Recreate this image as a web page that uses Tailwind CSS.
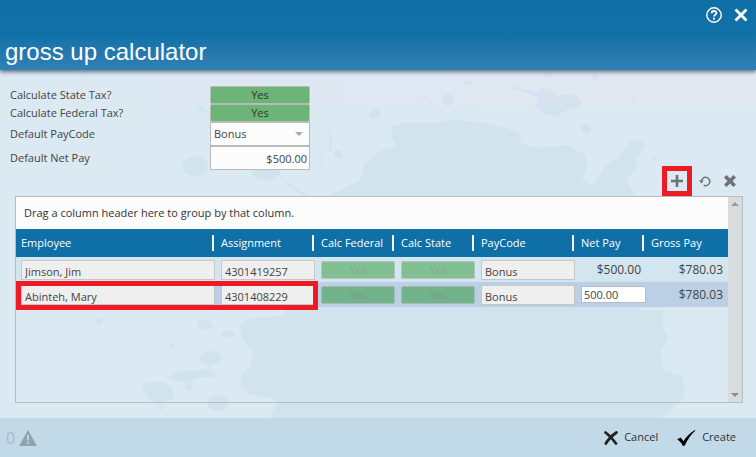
<!DOCTYPE html>
<html lang="en">
<head>
    <meta charset="UTF-8">
    <meta name="viewport" content="width=device-width, initial-scale=1.0">
    <title>Gross Up Calculator</title>
    <script src="https://cdn.jsdelivr.net/npm/@tailwindcss/browser@4"></script>
</head>
<body class="relative isolate min-h-screen flex flex-col bg-[#dae8f1] font-['Open_Sans',sans-serif] text-[11px] text-[#444]">
    <!-- paint splatter backdrop -->
    <svg class="absolute inset-0 -z-10 w-full h-full" viewBox="0 0 756 457" preserveAspectRatio="xMidYMid slice" aria-hidden="true">
        <defs>
            <linearGradient id="sky" x1="0" y1="0" x2="1" y2="0">
                <stop offset="0" stop-color="#dae9f2"/>
                <stop offset=".35" stop-color="#dfe8f2"/>
                <stop offset="1" stop-color="#e1e8f2"/>
            </linearGradient>
        </defs>
        <rect width="756" height="457" fill="#dae9f2"/>
        <rect y="70" width="756" height="37" fill="url(#sky)"/>
        <g fill="#d7e2f0">
            <path d="M511 86l26 6 4-4 9 1 7 6 8 0 8-1 9 6-1 5-5 3H535l3-6-3-6-24-8z"/>
            <ellipse cx="448" cy="100" rx="7" ry="6"/><ellipse cx="549" cy="75" rx="5" ry="3"/><ellipse cx="595" cy="77" rx="4" ry="3"/>
            <ellipse cx="468" cy="83" rx="5" ry="2"/><circle cx="424" cy="97" r="2"/><circle cx="633" cy="101" r="2"/>
        </g>
        <g fill="#d1e4ee">
            <path d="M535 105h46l-16 6-10 6-10-3z"/>
            <ellipse cx="375" cy="114" rx="6" ry="5"/><circle cx="586" cy="129" r="5"/><circle cx="654" cy="158" r="2"/>
            <path d="M320 200L360 180 364 164 378 152 396 146 391 136 392 126 408 122 430 123 452 120 478 122 500 126 518 132 522 144 538 148 566 145 584 154 588 164 582 180 594 186 606 164 618 158 630 142 640 139 645 146 636 158 637 168 626 180 638 200z"/>
            <path d="M284 200H640V310H664L662 325 668 338 661 350 663 370 682 376 685 390 682 400 662 418H270L278 400 250 394 240 384 242 374 250 366 254 350 242 340 240 326 250 318 284 316z"/>
            <ellipse cx="195" cy="166" rx="13" ry="10"/><ellipse cx="266" cy="172" rx="14" ry="9"/><circle cx="338" cy="154" r="4"/>
            <path d="M329 125l3 14-1 12-2 0zM196 103l14 9-2 2-8-4zM321 155l2 0-1 11-1 0zM276 176l24 14 12 8-6 0z"/>
            <ellipse cx="205" cy="325" rx="8" ry="5"/><ellipse cx="211" cy="358" rx="11" ry="7"/><ellipse cx="228" cy="334" rx="7" ry="4"/>
            <path d="M142 388l4-6 18 0 8 6 2 10-10 4-3 10-3-8-8-3zM168 378l8-6 24-2 8-2 8 4-2 6-14-1-16 6zM209 360h2v12h-2z"/>
            <ellipse cx="218" cy="403" rx="11" ry="8"/><circle cx="99" cy="321" r="4"/><circle cx="172" cy="346" r="3"/><circle cx="189" cy="386" r="4"/>
        </g>
    </svg>

    <header class="h-[70px] shrink-0 flex flex-col justify-between pt-[3px] pb-[2px] bg-linear-to-b from-[#106fa5] via-[#1171a8] to-[#3080b4] text-white shadow-[0_2px_4px_#5c6f80]">
        <div class="flex justify-end items-center gap-3 px-2 h-6">
            <button type="button" aria-label="Help">
                <svg class="w-4 h-4" viewBox="0 0 16 16" fill="none" stroke="currentColor">
                    <circle cx="8" cy="8" r="7.2" stroke-width="1.4"/>
                    <path d="M5.7 6.3c0-3 4.7-3 4.7-.2 0 1.6-2.3 1.6-2.3 3.4" stroke-width="1.9"/>
                    <path d="M8 10.7v1.9" stroke-width="2"/>
                </svg>
            </button>
            <button type="button" aria-label="Close">
                <svg class="w-[14px] h-[14px]" viewBox="0 0 14 14" fill="none" stroke="currentColor" stroke-width="2.8">
                    <path d="M1.5 1.5l11 11M12.5 1.500l-11 11"/>
                </svg>
            </button>
        </div>
        <h1 class="px-[5px] font-['Liberation_Sans',sans-serif] text-2xl">gross up calculator</h1>
    </header>

    <main class="flex-1 flex flex-col px-[10px] pt-4 pb-[15px]">
        <form class="grid grid-cols-[200px_100px] items-center">
            <label for="stateTax">Calculate State Tax?</label>
            <button type="button" id="stateTax" class="h-[18px] leading-4 rounded-xs border border-[#b5bdb8] bg-[#6db577] text-[#333]">Yes</button>
            <label for="federalTax">Calculate Federal Tax?</label>
            <button type="button" id="federalTax" class="h-[18px] leading-4 rounded-xs border border-[#b5bdb8] bg-[#6db577] text-[#333]">Yes</button>
            <label for="payCode">Default PayCode</label>
            <div class="relative">
                <select id="payCode" class="block w-full h-6 px-[3px] appearance-none border border-[#bbb] bg-[#fcfcfc]">
                    <option>Bonus</option>
                </select>
                <svg class="absolute right-[7px] top-[10px] w-2 h-1 pointer-events-none" viewBox="0 0 8 4" fill="#aaa"><path d="M0 0h8L4 4z"/></svg>
            </div>
            <label for="netPay">Default Net Pay</label>
            <input id="netPay" value="$500.00" class="h-6 w-full px-[2px] border border-[#bbb] bg-[#fcfcfc] text-right">
        </form>

        <div class="flex justify-end items-end h-[26px] pr-1 text-[#6d7278]">
            <button type="button" aria-label="Add row" class="w-[30px] h-[30px] flex items-center justify-center border-5 border-[#ed1c24]">
                <svg class="w-3 h-3" viewBox="0 0 12 12" fill="none" stroke="currentColor" stroke-width="2.6"><path d="M6 0v12M0 6h12"/></svg>
            </button>
            <button type="button" aria-label="Undo" class="w-[25px] h-[30px] flex items-center justify-center">
                <svg class="w-3 h-3" viewBox="0 0 12 12">
                    <path d="M2.4 6.500a4.200 4.200 0 1 1 2.200 3.700" fill="none" stroke="currentColor" stroke-width="1.5"/>
                    <path d="M0 5.500h4.800l-2.400 3z" fill="currentColor"/>
                </svg>
            </button>
            <button type="button" aria-label="Delete row" class="w-[25px] h-[30px] flex items-center justify-center">
                <svg class="w-3 h-3" viewBox="0 0 12 12" fill="none" stroke="currentColor" stroke-width="3.6"><path d="M1.3 1.3l9.400 9.400M10.700 1.300l-9.400 9.400"/></svg>
            </button>
        </div>

        <section class="flex-1 flex mx-[5px] mr-[3px] border border-[#b9bdc0]">
            <div class="flex-1">
                <p class="h-8 px-2 leading-8 bg-[#fcfcfd] text-[#333]">Drag a column header here to group by that column.</p>
                <table class="w-full table-fixed">
                    <colgroup>
                        <col>
                        <col class="w-[100px]">
                        <col class="w-[80px]">
                        <col class="w-[80px]">
                        <col class="w-[100px]">
                        <col class="w-[70px]">
                        <col class="w-[82px]">
                    </colgroup>
                    <thead class="bg-[#0e70a6] text-white text-left">
                        <tr class="h-7">
                            <th class="pl-[5px] pr-[2px] font-medium"><div class="border-r-2 border-white leading-4">Employee</div></th>
                            <th class="pl-[5px] pr-[2px] font-medium"><div class="border-r-2 border-white leading-4">Assignment</div></th>
                            <th class="pl-[5px] pr-[2px] font-medium"><div class="border-r-2 border-white leading-4">Calc Federal</div></th>
                            <th class="pl-[5px] pr-[2px] font-medium"><div class="border-r-2 border-white leading-4">Calc State</div></th>
                            <th class="pl-[5px] pr-[2px] font-medium"><div class="border-r-2 border-white leading-4">PayCode</div></th>
                            <th class="pl-[5px] pr-[2px] font-medium"><div class="border-r-2 border-white leading-4">Net Pay</div></th>
                            <th class="pl-[5px] font-medium">Gross Pay</th>
                        </tr>
                    </thead>
                    <tbody>
                        <tr class="h-[25px] bg-[#d3e5ef]">
                            <td class="pl-[5px] pr-px"><input aria-label="Employee" readonly value="Jimson, Jim" class="block w-full h-5 px-[3px] pt-1 border border-[#c3c7ca] bg-[#efefef]"></td>
                            <td class="pl-[5px] pr-px"><input aria-label="Assignment" readonly value="4301419257" class="block w-full h-5 px-[3px] pt-1 border border-[#c3c7ca] bg-[#efefef]"></td>
                            <td class="pl-[5px] pr-px"><button type="button" disabled class="block w-full h-[18px] leading-4 rounded-xs border border-[#b0c8bc] bg-[#82c093] text-[#7bac8b]">Yes</button></td>
                            <td class="pl-[5px] pr-px"><button type="button" disabled class="block w-full h-[18px] leading-4 rounded-xs border border-[#b0c8bc] bg-[#82c093] text-[#7bac8b]">Yes</button></td>
                            <td class="pl-[5px] pr-px"><input aria-label="PayCode" readonly value="Bonus" class="block w-full h-5 px-[3px] pt-1 border border-[#c3c7ca] bg-[#efefef]"></td>
                            <td class="pr-[5px] text-right text-xs">$500.00</td>
                            <td class="pr-[5px] text-right text-xs">$780.03</td>
                        </tr>
                        <tr class="h-[25px] bg-[#bccfe5]">
                            <td class="relative pl-[5px] pr-px">
                                <input aria-label="Employee" readonly value="Abinteh, Mary" class="block w-full h-5 px-[3px] pt-1 border border-[#c3c7ca] bg-[#efefef]">
                                <span class="absolute left-0 -right-[102px] -top-px -bottom-[3px] border-5 border-[#ed1c24] pointer-events-none"></span>
                            </td>
                            <td class="pl-[5px] pr-px"><input aria-label="Assignment" readonly value="4301408229" class="block w-full h-5 px-[3px] pt-1 border border-[#c3c7ca] bg-[#efefef]"></td>
                            <td class="pl-[5px] pr-px"><button type="button" disabled class="block w-full h-[18px] leading-4 rounded-xs border border-[#a3bcb8] bg-[#72b38c] text-[#70a085]">Yes</button></td>
                            <td class="pl-[5px] pr-px"><button type="button" disabled class="block w-full h-[18px] leading-4 rounded-xs border border-[#a3bcb8] bg-[#72b38c] text-[#70a085]">Yes</button></td>
                            <td class="pl-[5px] pr-px"><input aria-label="PayCode" readonly value="Bonus" class="block w-full h-5 px-[3px] pt-1 border border-[#c3c7ca] bg-[#efefef]"></td>
                            <td class="pl-[5px]"><input aria-label="Net Pay" value="500.00" class="block w-full h-[17px] px-[2px] border border-[#b9bdc0] bg-white"></td>
                            <td class="pr-[5px] text-right text-xs">$780.03</td>
                        </tr>
                    </tbody>
                </table>
            </div>
            <!-- scrollbar track -->
            <div class="w-[14px] flex flex-col items-center justify-between py-[5px] bg-[#d9dcdf]">
                <svg class="w-2 h-1" viewBox="0 0 8 4" fill="#999"><path d="M0 4h8L4 0z"/></svg>
                <svg class="w-2 h-1" viewBox="0 0 8 4" fill="#8a8a8a"><path d="M0 0h8L4 4z"/></svg>
            </div>
        </section>
    </main>

    <footer class="h-[39px] shrink-0 flex items-center justify-between pl-[6px] pr-5 bg-[#c2dae8]">
        <div class="flex items-center gap-1 text-base text-[#a9bdc8]">
            <span>0</span>
            <svg class="w-[18px] h-4" viewBox="0 0 18 16"><path d="M9 0l9 16H0z" fill="#91a3ad"/><path d="M9 5v5.500M9 12v2" stroke="#c2dae8" stroke-width="1.8"/></svg>
        </div>
        <div class="flex items-center gap-[18px] text-[#333]">
            <button type="button" class="flex items-center gap-[6px]">
                <svg class="w-[14px] h-[14px]" viewBox="0 0 14 14" fill="none" stroke="#222" stroke-width="2.8" stroke-linecap="round"><path d="M1.500 1.500c4 3 7 6.500 10.500 11M12.500 1.500C8 4.500 4.500 8 1.800 12.500"/></svg>
                Cancel
            </button>
            <button type="button" class="flex items-center gap-[6px]">
                <svg class="w-5 h-4" viewBox="0 0 20 16" fill="#000"><path d="M1 9.500l3.500-2 3 3.500C10.500 6.500 14 3 19 0l.3.700C15 4.500 11.500 9.500 8.800 15.500l-2 .5C5.500 13 3.500 10.500 1 9.500z"/></svg>
                Create
            </button>
        </div>
    </footer>
</body>
</html>
